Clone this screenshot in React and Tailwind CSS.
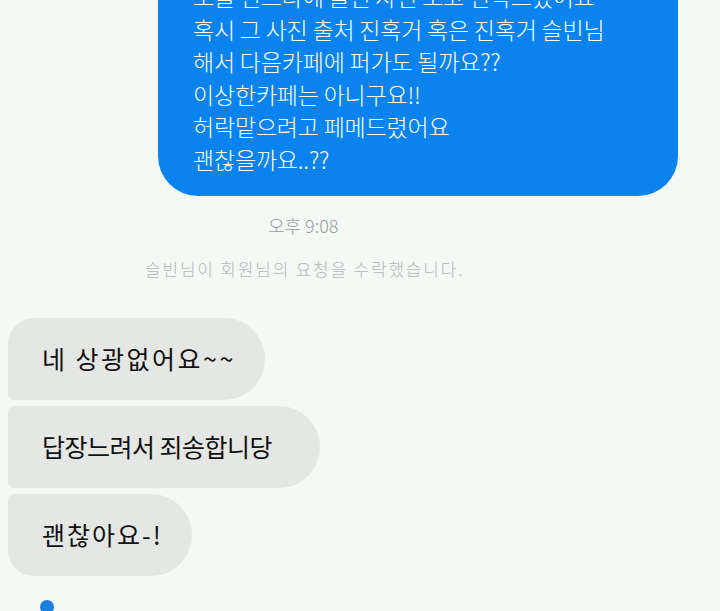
import React from 'react';

const font = { fontFamily: '"Noto Sans CJK KR", "Noto Sans", sans-serif' };

const sentLines = [
  '오늘 인스타에 올린 사진 보고 연락드렸어요',
  '혹시 그 사진 출처 진혹거 혹은 진혹거 슬빈님',
  '해서 다음카페에 퍼가도 될까요??',
  '이상한카페는 아니구요!!',
  '허락맡으려고 페메드렸어요',
  '괜찮을까요..??',
];

const replies = [
  { text: '네 상광없어요~~', w: 'w-[257px]', track: 'tracking-[2.5px]', shape: 'rounded-tl-[26px] rounded-bl-[6px]' },
  { text: '답장느려서 죄송합니당', w: 'w-[312px]', track: 'tracking-[-0.5px]', shape: 'rounded-tl-[6px] rounded-bl-[6px]' },
  { text: '괜찮아요-!', w: 'w-[184px]', track: 'tracking-[2px]', shape: 'rounded-tl-[6px] rounded-bl-[26px]' },
];

export default function App() {
  return (
    <div className="w-[720px] h-[611px] overflow-hidden bg-[#f4f9f5]" style={font}>
      <div className="flex flex-col">
        <div className="ml-[158px] mt-[-34px] w-[520px] bg-[#0b83ef] rounded-b-[40px] pl-[35px] pr-4 pt-[14px] pb-[21px] text-white text-[23px] font-light tracking-[-0.2px] leading-[32.5px]">
          {sentLines.map((l, i) => (
            <div key={i} className="whitespace-nowrap">{l}</div>
          ))}
        </div>

        <div className="ml-[268px] mt-[16px] text-[18px] leading-[26px] font-light text-[#9c9c9c]">오후 9:08</div>
        <div className="ml-[145px] mt-[20px] text-[17px] leading-[22px] font-light tracking-[1.8px] text-[#b5b7b5]">
          슬빈님이 회원님의 요청을 수락했습니다.
        </div>

        <div className="mt-[38px] ml-[8px] flex flex-col gap-[6px]">
          {replies.map((r, i) => (
            <div
              key={i}
              className={`${r.w} h-[82px] flex items-center pl-[34px] bg-[#e5e7e5] rounded-r-[41px] ${r.shape} text-[25px] ${r.track} text-[#111] whitespace-nowrap`}
            >
              {r.text}
            </div>
          ))}
        </div>

        <div className="ml-[40px] mt-[24px] w-[14px] h-[14px] rounded-full bg-[#1a7fe0]" />
      </div>
    </div>
  );
}
